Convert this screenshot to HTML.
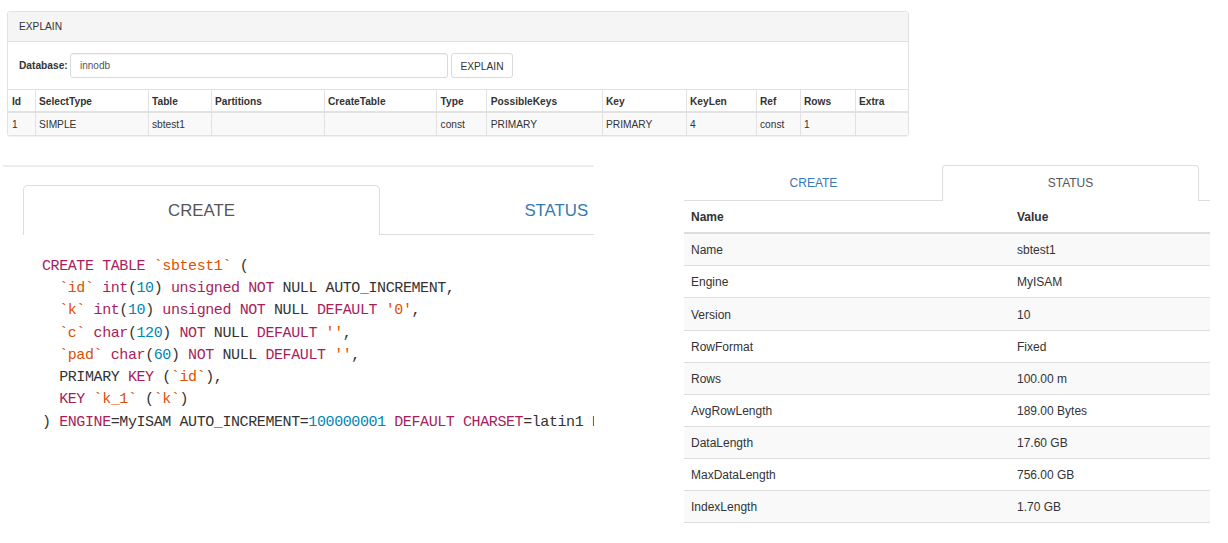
<!DOCTYPE html>
<html>
<head>
<meta charset="utf-8">
<title>EXPLAIN</title>
<style>
html,body{margin:0;padding:0;background:#fff;}
body{width:1228px;height:543px;position:relative;overflow:hidden;font-family:"Liberation Sans",sans-serif;color:#333;}
*{box-sizing:border-box;}
.abs{position:absolute;}
/* ---------- top panel ---------- */
#panel{left:7px;top:11px;width:902px;height:125px;border:1px solid #e2e2e2;border-radius:3px;box-shadow:0 1px 1px rgba(0,0,0,.06);background:#fff;}
#phead{left:0;top:0;width:900px;height:30px;background:#f5f5f5;border-bottom:1px solid #e2e2e2;border-radius:2px 2px 0 0;font-size:10.2px;line-height:29px;padding-left:11px;}
#dblabel{left:11px;top:47px;font-size:10.2px;font-weight:bold;line-height:14px;}
#dbinput{left:62px;top:41px;width:378px;height:25px;border:1px solid #dadada;border-radius:3px;font-size:10px;line-height:23px;padding-left:9px;color:#555;box-shadow:inset 0 1px 1px rgba(0,0,0,.05);}
#btn{left:443px;top:41px;width:62px;height:25px;border:1px solid #dadada;border-radius:3px;font-size:10.2px;line-height:25px;text-align:center;color:#333;}
#etable{left:0;top:77px;width:900px;height:46px;}
#etable .hr{left:0;top:0;width:900px;height:24px;border-top:1px solid #e2e2e2;border-bottom:2px solid #e2e2e2;}
#etable .dr{left:0;top:24px;width:900px;height:22px;background:#f9f9f9;}
#etable .c{position:absolute;top:0;height:46px;border-left:1px solid #e2e2e2;}
#etable .h{position:absolute;top:2px;font-size:10.2px;font-weight:bold;line-height:22px;white-space:nowrap;}
#etable .d{position:absolute;top:24.5px;font-size:10.2px;line-height:22px;white-space:nowrap;}
/* ---------- left bottom ---------- */
#lline{left:3px;top:165px;width:591px;height:2px;background:#ececec;}
#ltab{left:23px;top:185px;width:357px;height:50px;border:1px solid #ddd;border-bottom:none;border-radius:5px 5px 0 0;font-size:16.8px;line-height:50px;text-align:center;color:#555;}
#lbar{left:379px;top:234px;width:215px;height:1px;background:#ddd;}
#lstatus{left:524.4px;top:187px;font-size:16.8px;line-height:48px;color:#337ab7;}
#codewrap{left:0;top:240px;width:594px;height:220px;overflow:hidden;}
#code{left:42px;top:15.7px;font-family:"Liberation Mono",monospace;font-size:15px;letter-spacing:-0.41px;line-height:22.28px;white-space:pre;color:#333;margin:0;}
.k{color:#a71d5d;}
.s{color:#df5000;}
.n{color:#0086b3;}
/* ---------- right bottom ---------- */
#rtabc{left:685px;top:165px;width:257px;height:36px;font-size:12px;line-height:36px;text-align:center;color:#337ab7;}
#rtabs{left:942px;top:165px;width:257px;height:36px;border:1px solid #ddd;border-bottom:none;border-radius:4px 4px 0 0;font-size:12px;line-height:35px;text-align:center;color:#555;}
#rbar1{left:684px;top:200px;width:259px;height:1px;background:#ddd;}
#rbar2{left:1198px;top:200px;width:12px;height:1px;background:#ddd;}
#rtable{left:684px;top:201px;width:526px;}
.rr{position:absolute;left:0;width:526px;height:35px;border-top:1px solid #ddd;font-size:12px;line-height:33px;}
.rr span{position:absolute;top:1px;white-space:nowrap;}
.rr .a{left:7px;}
.rr .b{left:333px;}
</style>
</head>
<body>
<!-- top panel -->
<div id="panel" class="abs">
  <div id="phead" class="abs">EXPLAIN</div>
  <div id="dblabel" class="abs">Database:</div>
  <div id="dbinput" class="abs">innodb</div>
  <div id="btn" class="abs">EXPLAIN</div>
  <div id="etable" class="abs">
    <div class="hr abs"></div>
    <div class="dr abs"></div>
    <div class="c" style="left:27px"></div>
    <div class="c" style="left:140px"></div>
    <div class="c" style="left:203px"></div>
    <div class="c" style="left:316px"></div>
    <div class="c" style="left:428px"></div>
    <div class="c" style="left:478px"></div>
    <div class="c" style="left:594px"></div>
    <div class="c" style="left:678px"></div>
    <div class="c" style="left:748px"></div>
    <div class="c" style="left:792px"></div>
    <div class="c" style="left:847px"></div>
    <span class="h" style="left:4px">Id</span>
    <span class="h" style="left:31px">SelectType</span>
    <span class="h" style="left:144px">Table</span>
    <span class="h" style="left:207px">Partitions</span>
    <span class="h" style="left:320px">CreateTable</span>
    <span class="h" style="left:432.6px">Type</span>
    <span class="h" style="left:482.8px">PossibleKeys</span>
    <span class="h" style="left:598px">Key</span>
    <span class="h" style="left:682px">KeyLen</span>
    <span class="h" style="left:752px">Ref</span>
    <span class="h" style="left:796px">Rows</span>
    <span class="h" style="left:851px">Extra</span>
    <span class="d" style="left:4px">1</span>
    <span class="d" style="left:31px">SIMPLE</span>
    <span class="d" style="left:144px">sbtest1</span>
    <span class="d" style="left:432.6px">const</span>
    <span class="d" style="left:482.8px">PRIMARY</span>
    <span class="d" style="left:598px">PRIMARY</span>
    <span class="d" style="left:682px">4</span>
    <span class="d" style="left:752px">const</span>
    <span class="d" style="left:796px">1</span>
  </div>
</div>

<!-- left bottom -->
<div id="lline" class="abs"></div>
<div id="ltab" class="abs">CREATE</div>
<div id="lbar" class="abs"></div>
<div id="lstatus" class="abs">STATUS</div>
<div id="codewrap" class="abs"><pre id="code" class="abs"><span class="k">CREATE</span> <span class="k">TABLE</span> <span class="s">`sbtest1`</span> (
  <span class="s">`id`</span> <span class="k">int</span>(<span class="n">10</span>) <span class="k">unsigned</span> <span class="k">NOT</span> NULL AUTO_INCREMENT,
  <span class="s">`k`</span> <span class="k">int</span>(<span class="n">10</span>) <span class="k">unsigned</span> <span class="k">NOT</span> NULL <span class="k">DEFAULT</span> <span class="s">'0'</span>,
  <span class="s">`c`</span> <span class="k">char</span>(<span class="n">120</span>) <span class="k">NOT</span> NULL <span class="k">DEFAULT</span> <span class="s">''</span>,
  <span class="s">`pad`</span> <span class="k">char</span>(<span class="n">60</span>) <span class="k">NOT</span> NULL <span class="k">DEFAULT</span> <span class="s">''</span>,
  PRIMARY <span class="k">KEY</span> (<span class="s">`id`</span>),
  <span class="k">KEY</span> <span class="s">`k_1`</span> (<span class="s">`k`</span>)
) <span class="k">ENGINE</span>=MyISAM AUTO_INCREMENT=<span class="n">100000001</span> <span class="k">DEFAULT</span> <span class="k">CHARSET</span>=latin1 PACK_KEYS=0</pre></div>

<!-- right bottom -->
<div id="rtabc" class="abs">CREATE</div>
<div id="rtabs" class="abs">STATUS</div>
<div id="rbar1" class="abs"></div>
<div id="rbar2" class="abs"></div>
<div id="rtable" class="abs">
  <div class="rr" style="top:0;height:31px;border-top:none;font-weight:bold;line-height:31px;"><span class="a">Name</span><span class="b">Value</span></div>
  <div class="abs" style="left:0;top:31px;width:526px;height:2px;background:#ddd;"></div>
  <div class="rr" style="top:33px;height:31px;border-top:none;background:#f9f9f9;line-height:31px;"><span class="a">Name</span><span class="b">sbtest1</span></div>
  <div class="rr" style="top:64px;height:32px;line-height:31px;"><span class="a">Engine</span><span class="b">MyISAM</span></div>
  <div class="rr" style="top:96px;height:33px;background:#f9f9f9;line-height:32px;"><span class="a">Version</span><span class="b">10</span></div>
  <div class="rr" style="top:129px;height:32px;line-height:31px;"><span class="a">RowFormat</span><span class="b">Fixed</span></div>
  <div class="rr" style="top:161px;height:32px;background:#f9f9f9;line-height:31px;"><span class="a">Rows</span><span class="b">100.00 m</span></div>
  <div class="rr" style="top:193px;height:32px;line-height:31px;"><span class="a">AvgRowLength</span><span class="b">189.00 Bytes</span></div>
  <div class="rr" style="top:225px;height:32px;background:#f9f9f9;line-height:31px;"><span class="a">DataLength</span><span class="b">17.60 GB</span></div>
  <div class="rr" style="top:257px;height:32px;line-height:31px;"><span class="a">MaxDataLength</span><span class="b">756.00 GB</span></div>
  <div class="rr" style="top:289px;height:32px;background:#f9f9f9;line-height:31px;"><span class="a">IndexLength</span><span class="b">1.70 GB</span></div>
  <div class="abs" style="left:0;top:321px;width:526px;height:1px;background:#ddd;"></div>
</div>
</body>
</html>
